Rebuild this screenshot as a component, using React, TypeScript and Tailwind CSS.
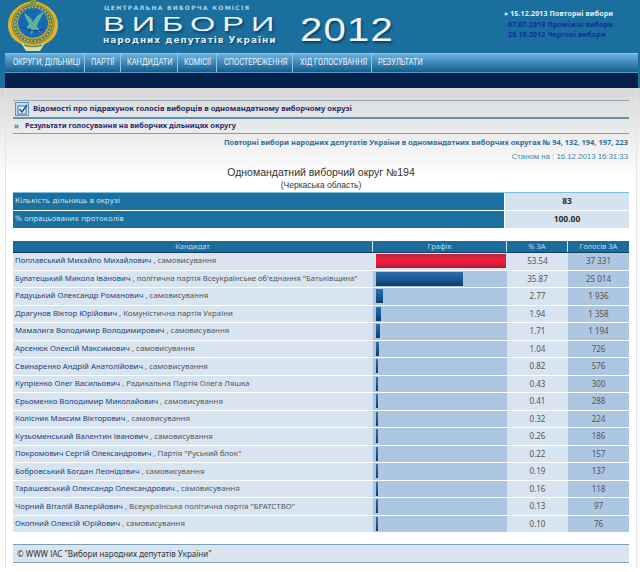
import React from "react";

const rows: [string, string, number, string][] = [
  ["Поплавський Михайло Михайлович", "самовисування", 53.54, "37 331"],
  ["Булатецький Микола Іванович", "політична партія Всеукраїнське об'єднання \"Батьківщина\"", 35.87, "25 014"],
  ["Радуцький Олександр Романович", "самовисування", 2.77, "1 936"],
  ["Драгунов Віктор Юрійович", "Комуністична партія України", 1.94, "1 358"],
  ["Мамалига Володимир Володимирович", "самовисування", 1.71, "1 194"],
  ["Арсенюк Олексій Максимович", "самовисування", 1.04, "726"],
  ["Свинаренко Андрій Анатолійович", "самовисування", 0.82, "576"],
  ["Купрієнко Олег Васильович", "Радикальна Партія Олега Ляшка", 0.43, "300"],
  ["Єрьоменко Володимир Миколайович", "самовисування", 0.41, "288"],
  ["Колісник Максим Вікторович", "самовисування", 0.32, "224"],
  ["Кузьоменський Валентин Іванович", "самовисування", 0.26, "186"],
  ["Покромович Сергій Олександрович", "Партія \"Руський блок\"", 0.22, "157"],
  ["Бобровський Богдан Леонідович", "самовисування", 0.19, "137"],
  ["Тарашевський Олександр Олександрович", "самовисування", 0.16, "118"],
  ["Чорний Віталій Валерійович", "Всеукраїнська політична партія \"БРАТСТВО\"", 0.13, "97"],
  ["Окопний Олексій Юрійович", "самовисування", 0.1, "76"],
];

const nav = [
  ["ОКРУГИ, ДІЛЬНИЦІ", "w-[80px] pl-[8px]"],
  ["ПАРТІЇ", "w-[36px] pl-[6px]"],
  ["КАНДИДАТИ", "w-[57px] pl-[6px]"],
  ["КОМІСІЇ", "w-[39px] pl-[6px]"],
  ["СПОСТЕРЕЖЕННЯ", "w-[76px] pl-[7px]"],
  ["ХІД ГОЛОСУВАННЯ", "w-[79px] pl-[7px]"],
  ["РЕЗУЛЬТАТИ", "w-[60px] pl-[6px]"],
];

function Logo() {
  return (
    <svg width="52" height="52" viewBox="0 0 52 52" className="shrink-0">
      <path d="M26 1 C12 3 1 12 1 25 C1 38 12 46 26 47 C40 46 51 38 51 25 C51 12 40 3 26 1 Z" fill="#d8b52c" />
      <ellipse cx="26" cy="24" rx="21" ry="20" fill="#c49c1e" stroke="#9a8428" strokeWidth="1" />
      <ellipse cx="26" cy="24" rx="18" ry="17" fill="none" stroke="#3d7f7a" strokeWidth="3" />
      <ellipse cx="26" cy="24" rx="18" ry="17" fill="none" stroke="#e6d97a" strokeWidth="1.2" strokeDasharray="1.5 2" />
      <ellipse cx="26" cy="23" rx="15" ry="14.5" fill="#1568b5" />
      <path d="M17 13 C21 15 24 18 26 22 C28 18 31 14 37 12 C34 18 31 22 30 26 L34 33 L28 29 L24 35 L24 28 L19 29 L22 24 C20 21 18 17 17 13 Z" fill="#66b996" opacity="0.9" />
      <path d="M16 27 C22 31 30 33 38 28" fill="none" stroke="#0d3f7a" strokeWidth="1" />
      <rect x="23" y="0" width="6" height="5" fill="#7d9a3a" />
      <path d="M14 43 Q26 47 38 43 L33 51 L19 51 Z" fill="#d5dda8" />
      <path d="M17 45 Q26 48 35 45" fill="none" stroke="#6a8a4a" strokeWidth="1.5" />
    </svg>
  );
}

function Check() {
  return (
    <div className="w-[14px] h-[14px] bg-[#c8dcec] border border-[#5d94bd] flex items-center justify-center">
      <svg width="11" height="11" viewBox="0 0 11 11">
        <rect x="1" y="2" width="8" height="8" fill="#eef4fa" stroke="#3f6f9f" />
        <path d="M2.5 5 L5 8 L10 1" fill="none" stroke="#1f5a96" strokeWidth="1.6" />
      </svg>
    </div>
  );
}

export default function App() {
  return (
    <div className="w-[640px] h-[572px] overflow-hidden bg-white font-['Noto_Sans',sans-serif]">
      {/* Header */}
      <header className="h-[88px] bg-[#1a6f9e] flex flex-col">
        <div className="h-[53px] flex pl-[7px]">
          <Logo />
          <div className="w-[44px] shrink-0" />
          <div className="flex flex-col w-[190px] shrink-0 font-['DejaVu_Sans',sans-serif]">
            <div className="text-[6px] leading-[7px] mt-[4px] ml-[1px] tracking-[1.25px] text-[#a9d3e8] font-bold whitespace-nowrap">ЦЕНТРАЛЬНА ВИБОРЧА КОМІСІЯ</div>
            <div className="font-['Liberation_Sans',sans-serif] text-[21px] leading-[18px] mt-[4px] tracking-[4.5px] scale-x-[1.55] origin-left text-[#e8f4fb] whitespace-nowrap [text-shadow:1px_2px_2px_#0c3f60]">ВИБОРИ</div>
            <div className="text-[9px] leading-[10px] mt-[2px] tracking-[0.95px] font-bold text-[#dcedf6] whitespace-nowrap [text-shadow:1px_1px_1px_#0c3f60]">народних депутатів України</div>
          </div>
          <div className="font-['Liberation_Sans',sans-serif] text-[34px] leading-[26px] mt-[16px] ml-[7px] tracking-[1px] scale-x-[1.18] origin-left text-[#eef7fc] [text-shadow:1px_2px_2px_#0c3f60] w-[205px]">2012</div>
          <div className="flex flex-col text-[7px] leading-[10px] mt-[9px] font-bold whitespace-nowrap tracking-[0.15px]">
            <div className="text-[#e6f2f8] flex items-center"><span className="text-[4px] mr-[2px]">▶</span>15.12.2013 Повторні вибори</div>
            <div className="text-[#0d2f9c] pl-[3px] mt-[0.5px]">07.07.2013 Проміжні вибори</div>
            <div className="text-[#0d2f9c] pl-[3px] mt-[0.5px]">28.10.2012 Чергові вибори</div>
          </div>
        </div>
        <nav className="ml-[5px] h-[19px] w-[633px] flex bg-gradient-to-b from-[#6fb2dc] via-[#3b87b7] to-[#145f8d] border-t border-[#8cc4e4]">
          {nav.map(([t, w]) => (
            <div key={t} className={`${w} h-full flex items-center border-r border-[#8cc4e4] last:border-r-0 font-['Roboto',sans-serif] text-[#eaf4fa] whitespace-nowrap`}>
              <span className="inline-block text-[9px] scale-x-[0.82] origin-left">{t}</span>
            </div>
          ))}
        </nav>
        <div className="ml-[5px] w-[633px] h-[16px] bg-[#02204b] border-t border-[#5a9bc4]" />
      </header>

      {/* Body */}
      <div className="h-[484px] bg-[linear-gradient(#d8d8d8,#ffffff_90px,#ffffff)]">
        <div className="ml-[5px] w-[632px] h-[480px] border-l border-r border-[#e4e4e4] pl-[7px] pr-[7px] flex flex-col pt-[12px]">
          <div className="h-[16px] border-t border-[#8fa9bb] border-b-2 border-b-[#5d94b5] flex items-center box-content">
            <div className="ml-[2px] mr-[4px]"><Check /></div>
            <div className="text-[7.6px] font-bold text-[#1f2a70] whitespace-nowrap">Відомості про підрахунок голосів виборців в одномандатному виборчому окрузі</div>
          </div>
          <div className="h-[14px] border-b border-[#7d9fb7] flex items-center box-content">
            <span className="text-[8px] text-[#4d7590] font-bold ml-[1px] mr-[6px]">»</span>
            <div className="text-[7.4px] font-bold text-[#1f2a70] whitespace-nowrap">Результати голосування на виборчих дільницях округу</div>
          </div>
          <div className="text-right text-[7.45px] leading-[10px] font-bold text-[#2d6f9c] mt-[3px] pr-[1px] whitespace-nowrap">Повторні вибори народних депутатів України в одномандатних виборчих округах № 94, 132, 194, 197, 223</div>
          <div className="font-['Liberation_Sans',sans-serif] text-right text-[7.8px] leading-[10px] text-[#3b86b3] mt-[5px] pr-[1px]">Станом на : 16.12.2013 16:31:33</div>
          <div className="font-['Liberation_Sans',sans-serif] text-center text-[#333] text-[10.5px] leading-[13px] mt-[4px]">Одномандатний виборчий округ №194</div>
          <div className="font-['Liberation_Sans',sans-serif] text-center text-[#333] text-[8.5px] leading-[10px] mt-[1px]">(Черкаська область)</div>

          {/* Info table */}
          <div className="grid grid-cols-[492px_124px] gap-y-px mt-[2px] border-t border-[#7cc0dc]">
            {[["Кількість дільниць в окрузі", "83"], ["% опрацьованих протоколів", "100.00"]].map(([a, b]) => (
              <React.Fragment key={a}>
                <div className="h-[17px] bg-[#1a719f] text-[#cfe4ef] text-[7.3px] font-['DejaVu_Sans',sans-serif] flex items-center pl-[2px] border-r border-white">{a}</div>
                <div className="h-[17px] bg-[#d5e3f0] text-[#2e2e2e] text-[8.5px] font-bold flex items-center justify-center">{b}</div>
              </React.Fragment>
            ))}
          </div>

          {/* Results */}
          <div className="grid grid-cols-[360px_134px_61px_61px] h-[11px] mt-[13px] bg-[#1a6c9c] text-[#b9dbec] text-[7.5px] leading-[11px] text-center border-b border-[#123f5f] box-content">
            <div className="border-r border-[#cfe4ef]">Кандидат</div>
            <div className="border-r border-[#cfe4ef]">Графік</div>
            <div className="border-r border-[#cfe4ef]">% ЗА</div>
            <div>Голосів ЗА</div>
          </div>
          <div className="grid grid-cols-[360px_134px_61px_61px] auto-rows-[16.53px] gap-y-px">
            {rows.map(([name, party, pct, votes], i) => (
              <React.Fragment key={name}>
                <div className="bg-[#d8e5f1] flex items-center pl-[2px] text-[7.8px] whitespace-nowrap overflow-hidden text-[#555]">
                  <span className="text-[#1f3f7a]">{name}</span>&nbsp;, {party}
                </div>
                <div className={`${i === 0 ? "bg-[#d8e5f1]" : "bg-[#adc6e2]"} flex items-center pl-[3px]`}>
                  <div
                    className={`h-[14px] ${i === 0 ? "bg-gradient-to-b from-[#b8253f] via-[#fa1a3c] to-[#a81a38]" : "bg-gradient-to-b from-[#2a6eaa] via-[#1c5a96] to-[#0f3a6e]"}`}
                    style={{ width: Math.max(1.5, (pct / 53.54) * 130) }}
                  />
                </div>
                <div className="bg-[#d8e5f1] flex items-center justify-center text-[8px] text-[#555]">{pct.toFixed(2)}</div>
                <div className="bg-[#adc6e2] flex items-center justify-center text-[8px] text-[#555]">{votes}</div>
              </React.Fragment>
            ))}
          </div>

          <div className="mt-[12px] h-[17px] bg-[#d8e5f1] border-t border-b border-[#7d9fb7] flex items-center pl-[4px] text-[8px] text-[#333] box-content">© WWW ІАС "Вибори народних депутатів України"</div>
        </div>
      </div>
    </div>
  );
}
